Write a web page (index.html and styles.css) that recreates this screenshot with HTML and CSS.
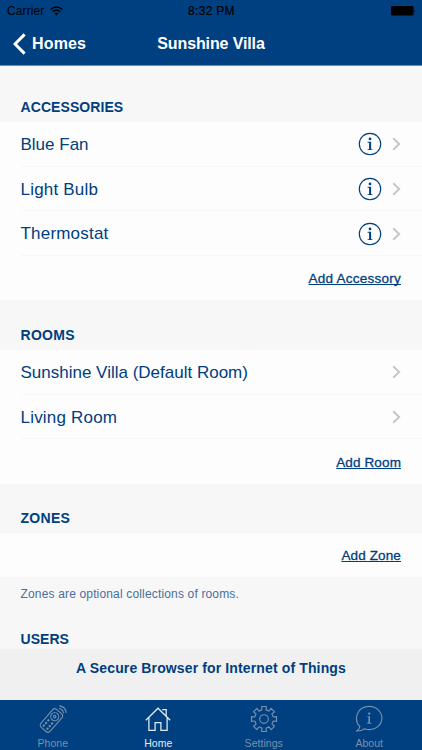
FILE: index.html
```html
<!DOCTYPE html>
<html lang="en">
<head>
<meta charset="utf-8">
<title>Sunshine Villa</title>
<link rel="stylesheet" href="styles.css">
</head>
<body>
<svg class="defs" aria-hidden="true">
  <symbol id="info" viewBox="0 0 24 24"><circle cx="12" cy="12" r="10.7" fill="none" stroke="currentColor" stroke-width="1.15"/><circle cx="12" cy="6.9" r="1.35" fill="currentColor"/><path d="M9.6 9.8h3.5v7.4h1.3v.9H9.6v-.9h1.5v-6.500H9.600z" fill="currentColor"/></symbol>
  <symbol id="chev" viewBox="0 0 9 14"><path d="M1.200 1.200 7.200 7l-6 5.800" fill="none" stroke="#c5c5ca" stroke-width="1.900"/></symbol>
  <g id="tooth"><path d="M-2-9.100-2.400-12.500H2.400L2-9.100Q3.400-8.800 5.020-7.850"/></g>
</svg>
<div class="screen">
  <header class="top">
    <div class="status">
      <div class="carrier"><span class="carrier-name">Carrier</span>
        <svg width="13" height="10" viewBox="0 0 13 10"><g fill="none" stroke="#000" stroke-width="1.500"><path d="M.7 3.500Q6.500-1.500 12.300 3.500M2.800 5.700Q6.500 2.500 10.200 5.700"/></g><path d="M4.400 7.300Q6.500 5.500 8.600 7.300L6.500 9.500z"/></svg>
      </div>
      <span class="clock">8:32 PM</span>
      <svg class="battery" width="25" height="10" viewBox="0 0 25 10"><rect width="22.500" height="9.500" rx="1.200"/><path d="M23.200 3q1.600 1.700 0 3.500z"/></svg>
    </div>
    <nav class="bar">
      <div class="back"><svg width="13" height="22" viewBox="0 0 13 22"><path d="M11.600 1.400 2 11l9.600 9.600" fill="none" stroke="#fff" stroke-width="3"/></svg><span class="back-label">Homes</span></div>
      <h1 class="title">Sunshine Villa</h1>
    </nav>
  </header>
  <main class="list">
    <h2 class="head first">ACCESSORIES</h2>
    <section class="group">
      <div class="row"><span class="name">Blue Fan</span><svg class="info"><use href="#info"/></svg><svg class="chev"><use href="#chev"/></svg></div>
      <div class="row"><span class="name wide">Light Bulb</span><svg class="info"><use href="#info"/></svg><svg class="chev"><use href="#chev"/></svg></div>
      <div class="row"><span class="name wide">Thermostat</span><svg class="info"><use href="#info"/></svg><svg class="chev"><use href="#chev"/></svg></div>
      <div class="row add"><span class="link long">Add Accessory</span></div>
    </section>
    <h2 class="head rooms">ROOMS</h2>
    <section class="group">
      <div class="row"><span class="name">Sunshine Villa (Default Room)</span><svg class="chev"><use href="#chev"/></svg></div>
      <div class="row"><span class="name wide">Living Room</span><svg class="chev"><use href="#chev"/></svg></div>
      <div class="row add room"><span class="link">Add Room</span></div>
    </section>
    <h2 class="head zones">ZONES</h2>
    <section class="group">
      <div class="row add"><span class="link">Add Zone</span></div>
    </section>
    <p class="note">Zones are optional collections of rooms.</p>
    <h2 class="head users">USERS</h2>
  </main>
  <div class="banner">A Secure Browser for Internet of Things</div>
  <footer class="tabs">
    <div class="tab">
      <svg class="icon" viewBox="0 0 28 28"><g fill="none" stroke="currentColor" stroke-width="1.100"><g transform="rotate(41 12 16)"><rect x="5.900" y="3.600" width="12.200" height="23.600" rx="3"/><circle cx="12" cy="10.300" r="4"/><circle cx="12" cy="10.300" r="1.200"/></g><path d="M19.900 3.500Q24 4 24.500 8.400M20.300.9Q26.600 1.600 27.200 8"/></g><g fill="currentColor" transform="rotate(41 12 16)"><circle cx="9.600" cy="17.200" r="1.200"/><circle cx="14.400" cy="17.200" r="1.200"/><circle cx="9.600" cy="20.700" r="1.200"/><circle cx="14.400" cy="20.700" r="1.200"/><circle cx="9.600" cy="24.100" r="1.200"/><circle cx="14.400" cy="24.100" r="1.200"/></g></svg>
      <span>Phone</span>
    </div>
    <div class="tab active">
      <svg class="icon" viewBox="0 0 28 28"><path d="M1.800 15.300 14 3.200l12.200 12.100M18.200 4.700h4v6.400M4.900 12.700v12.700h6.200v-7.700h5.800v7.700h6.200V12.700" fill="none" stroke="currentColor" stroke-width="1.250"/></svg>
      <span>Home</span>
    </div>
    <div class="tab">
      <svg class="icon" viewBox="0 0 28 28"><g transform="translate(14 14)" fill="none" stroke="currentColor" stroke-width="1.150" stroke-linejoin="round"><use href="#tooth"/><use href="#tooth" transform="rotate(45)"/><use href="#tooth" transform="rotate(90)"/><use href="#tooth" transform="rotate(135)"/><use href="#tooth" transform="rotate(180)"/><use href="#tooth" transform="rotate(225)"/><use href="#tooth" transform="rotate(270)"/><use href="#tooth" transform="rotate(315)"/><circle r="4.300"/></g></svg>
      <span>Settings</span>
    </div>
    <div class="tab">
      <svg class="icon" viewBox="0 0 28 28"><path d="M4.900 21.700C-2 14.500 2 1.400 14.300 1.400c7 0 12.600 5.200 12.600 11.600s-5.600 11.600-12.600 11.600c-2 0-3.200-.3-4.600-.9-2.200 1.700-5 2.300-7.900 2.300 1.500-1.200 2.600-2.500 3.100-4.300z" fill="none" stroke="currentColor" stroke-width="1.150"/><circle cx="14.200" cy="8.600" r="1.200" fill="currentColor"/><path d="M12.300 11.200h2.700v6.600h1.300v.9h-4.200v-.9h1.300v-5.700h-1.100z" fill="currentColor"/></svg>
      <span>About</span>
    </div>
  </footer>
</div>
</body>
</html>
```
FILE: styles.css
```css
* { box-sizing: border-box; }
body { margin: 0; font-family: "Liberation Sans", Arial, sans-serif; color: #003e7e; }
.defs { display: none; }
.screen { width: 422px; height: 750px; display: flex; flex-direction: column; overflow: hidden; background: #f7f7f7; }
.top { height: 66px; flex: none; background: #004080; border-bottom: 1px solid #6d8fb5; }
.status { height: 22px; display: grid; grid-template-columns: 1fr auto 1fr; align-items: center; padding: 0 6px 0 7px; font-size: 12px; color: #000; }
.carrier { display: flex; align-items: center; gap: 6px; }
.carrier-name { letter-spacing: .1px; }
.clock { letter-spacing: .3px; -webkit-text-stroke: .2px; }
.battery { justify-self: end; }
.bar { height: 43px; display: grid; grid-template-columns: 1fr auto 1fr; align-items: center; padding: 0 13px; color: #fff; font-size: 16px; font-weight: bold; }
.back { display: flex; align-items: center; gap: 6px; }
.back-label { letter-spacing: .15px; }
.title { margin: 0; font-size: 16px; letter-spacing: -.12px; }
.list { flex: 1; min-height: 0; overflow: hidden; }
.head { margin: 0; height: 50px; padding: 26px 0 0 20.500px; font-size: 14px; line-height: 18px; }
.first { height: 56px; padding-top: 32px; letter-spacing: .08px; }
.rooms { letter-spacing: .3px; }
.zones { height: 49px; padding-top: 25px; letter-spacing: .3px; }
.group { background: #fdfdfd; }
.row { height: 44.700px; margin-left: 20.500px; padding: 2px 21px 0 0; display: flex; align-items: center; border-bottom: 1px solid #f7f7f7; }
.name { flex: 1; font-size: 17px; white-space: nowrap; letter-spacing: 0; }
.wide { letter-spacing: .2px; }
.info { width: 24px; height: 24px; margin: 0 10px 1px 0; }
.chev { width: 9px; height: 14px; margin-bottom: 1px; }
.add { justify-content: flex-end; border: 0; height: 44px; }
.room { height: 45px; }
.link { font-size: 13.500px; line-height: 16px; letter-spacing: .12px; text-decoration: underline; text-decoration-thickness: 1px; text-underline-offset: 1px; text-decoration-skip-ink: none; -webkit-text-stroke: .3px; }
.long { letter-spacing: .24px; }
.note { margin: 0; padding: 9px 0 0 20.500px; height: 45px; font-size: 12px; line-height: 17px; letter-spacing: .16px; color: #476f9f; }
.users { padding-top: 8px; letter-spacing: .05px; }
.banner { height: 51px; flex: none; padding-top: 10px; background: #f0f0f0; text-align: center; font-size: 14px; line-height: 18px; font-weight: bold; letter-spacing: .13px; }
.tabs { height: 50px; flex: none; display: grid; grid-template-columns: repeat(4, 1fr); background: #004080; color: #7890ab; font-size: 10.500px; }
.tab { display: flex; flex-direction: column; align-items: center; padding-top: 5px; }
.icon { width: 28px; height: 28px; }
.tab span { line-height: 12px; margin-top: 4px; letter-spacing: .05px; }
.active { color: #e3ebf4; }
```
